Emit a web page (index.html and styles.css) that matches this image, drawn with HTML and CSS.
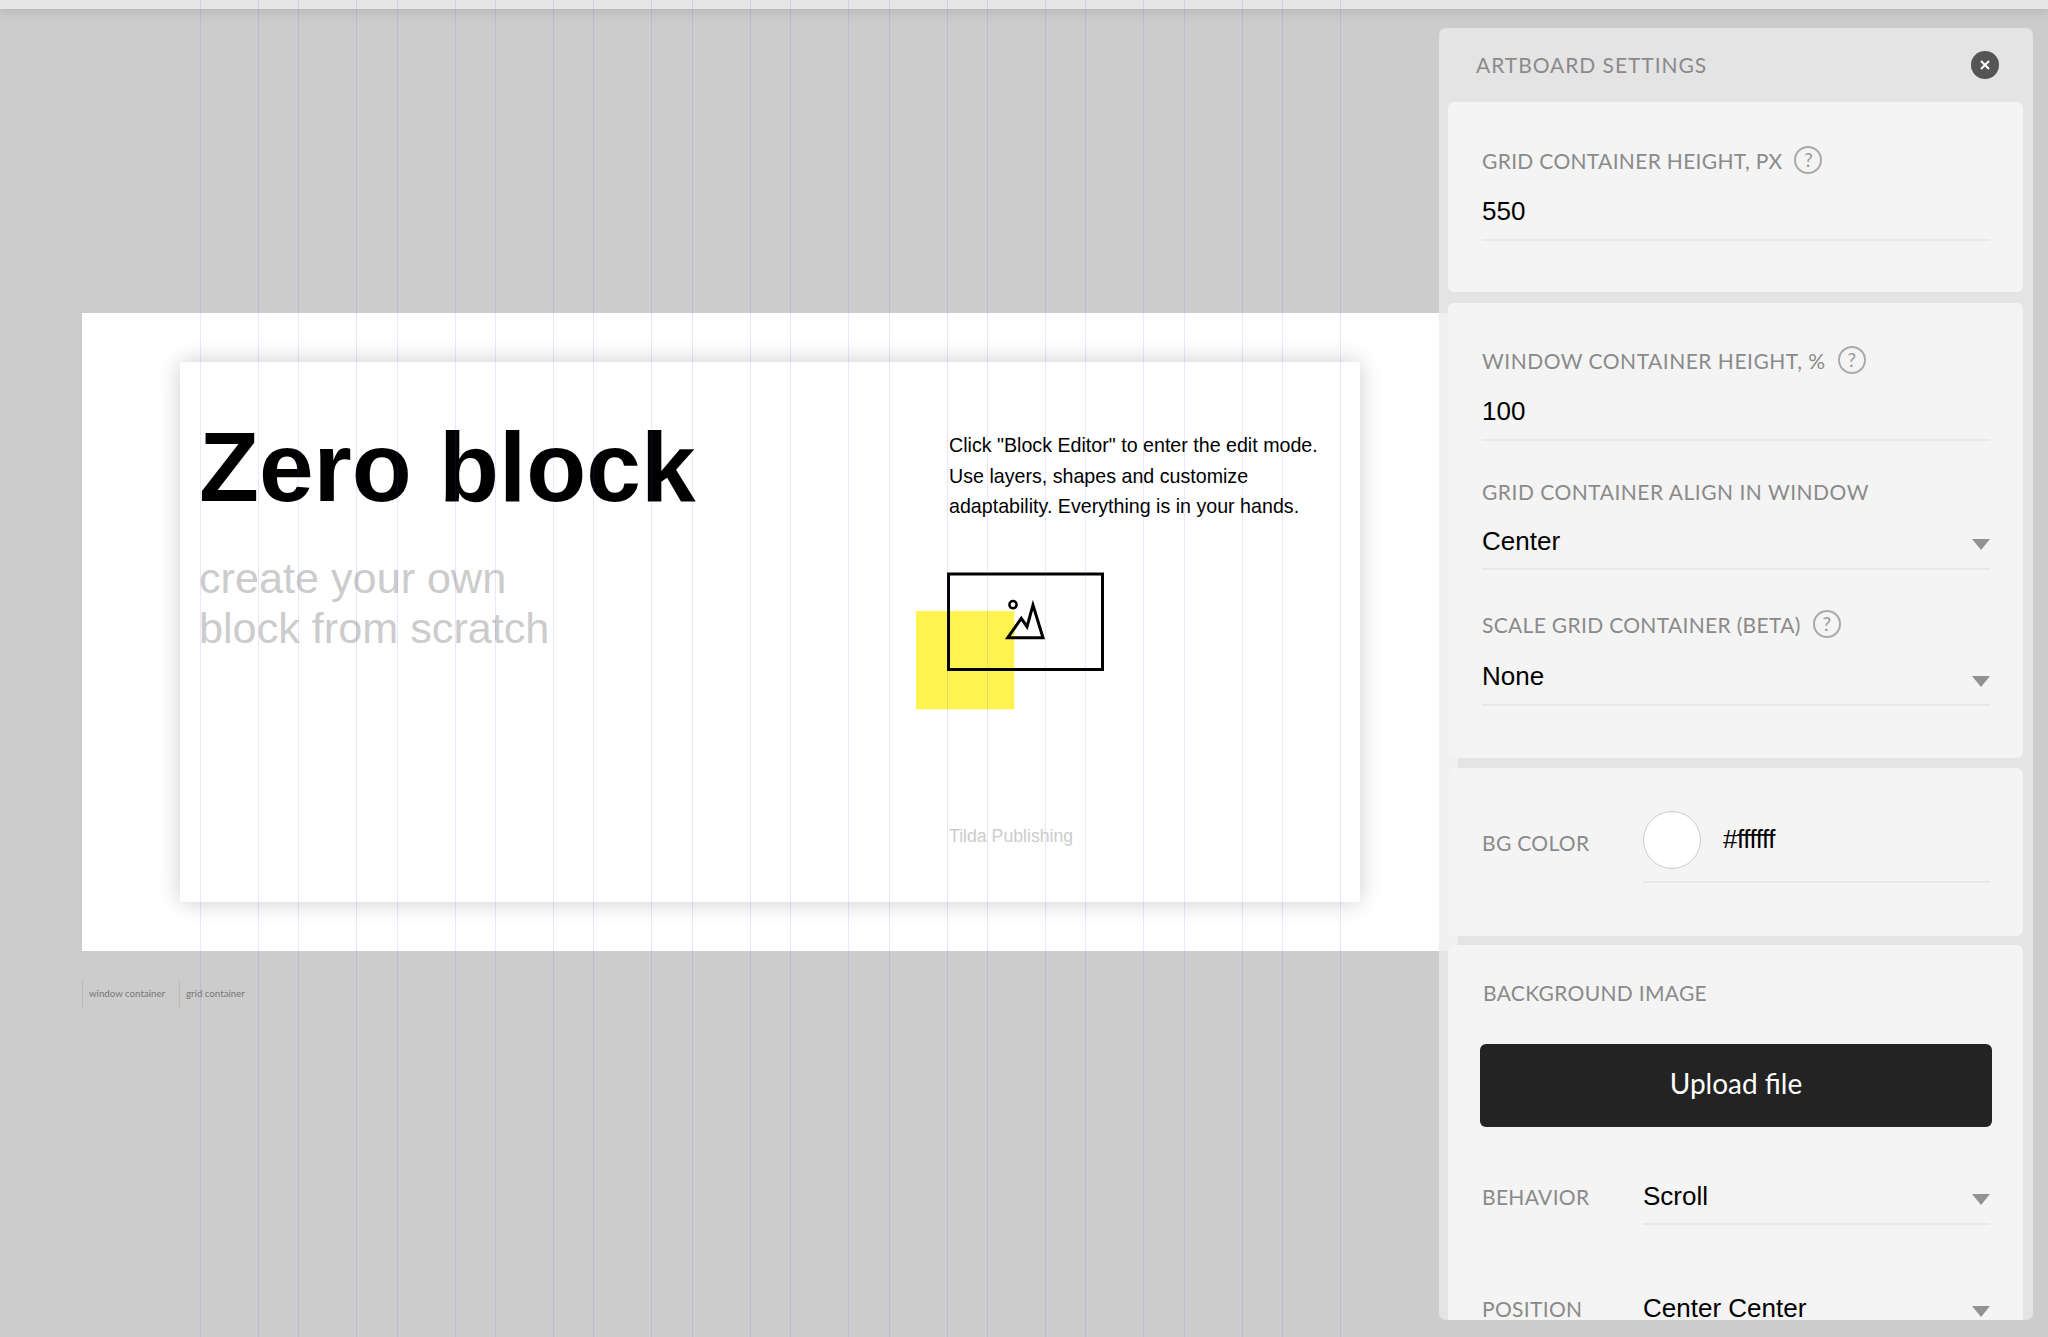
FILE: index.html
```html
<!DOCTYPE html>
<html lang="en">
<head>
<meta charset="utf-8">
<title>Artboard settings</title>
<link rel="stylesheet" href="styles.css">
</head>
<body>
<div class="topbar"></div>
<main class="stage">
  <section class="window">
    <div class="grid-container">
      <div class="col-left">
        <h1 class="title">Zero block</h1>
        <p class="subtitle">create your own<br>block from scratch</p>
      </div>
      <div class="col-right">
        <p class="lead">Click "Block Editor" to enter the edit mode.<br>Use layers, shapes and customize<br>adaptability. Everything is in your hands.</p>
        <svg class="picture" width="190" height="140" viewBox="0 0 190 140" aria-hidden="true">
          <rect class="pic-yellow" x="0" y="40" width="98.3" height="98.3"/>
          <rect class="pic-line" x="32.5" y="3" width="154" height="95.5"/>
          <circle class="pic-thin" cx="97" cy="33.7" r="3.6"/>
          <polygon class="pic-line" points="91.8,66.7 105.3,47.3 111,55.7 117,34 127,66.7"/>
        </svg>
        <p class="credit">Tilda Publishing</p>
      </div>
    </div>
  </section>
  <div class="tags">
    <span class="tag tag-window">window container</span>
    <span class="tag">grid container</span>
  </div>
</main>

<div class="guides" aria-hidden="true">
  <i></i><i></i><i></i><i></i><i></i><i></i><i></i><i></i><i></i><i></i><i></i><i></i>
</div>

<aside class="panel">
  <header class="panel-head">
    <h2 class="panel-title">ARTBOARD SETTINGS</h2>
    <button class="close" type="button" aria-label="Close">
      <svg width="12" height="12" viewBox="0 0 12 12"><path d="M2 2l8 8M10 2l-8 8"/></svg>
    </button>
  </header>

  <section class="card card-a">
    <div class="label">GRID CONTAINER HEIGHT, PX <span class="help">?</span></div>
    <div class="value v-a">550</div>
  </section>

  <section class="card card-b">
    <div class="label label-wide">WINDOW CONTAINER HEIGHT, % <span class="help">?</span></div>
    <div class="value v-a">100</div>
    <div class="label l-b label-wide">GRID CONTAINER ALIGN IN WINDOW</div>
    <div class="value v-b">Center<span class="caret"></span></div>
    <div class="label l-c">SCALE GRID CONTAINER (BETA) <span class="help">?</span></div>
    <div class="value v-c">None<span class="caret caret-low"></span></div>
  </section>

  <section class="card card-c">
    <div class="row">
      <div class="label row-label bg-label">BG COLOR</div>
      <div class="swatch-field">
        <span class="swatch"></span>
        <span class="hex">#ffffff</span>
      </div>
    </div>
  </section>

  <section class="card card-d">
    <div class="label image-label">BACKGROUND IMAGE</div>
    <button class="upload" type="button">Upload file</button>
    <div class="row row-behavior">
      <div class="label row-label">BEHAVIOR</div>
      <div class="value row-value">Scroll<span class="caret"></span></div>
    </div>
    <div class="row row-position">
      <div class="label row-label">POSITION</div>
      <div class="value row-value">Center Center<span class="caret caret-high"></span></div>
    </div>
  </section>
</aside>
</body>
</html>
```
FILE: styles.css
```css
* { box-sizing: border-box; }

html, body {
  margin: 0;
  height: 1337px;
  overflow: hidden;
}

body {
  position: relative;
  background: #ccc;
  font-family: "Liberation Sans", Arial, sans-serif;
  color: #000;
}

p, h1, h2 { margin: 0; font-weight: normal; }

.topbar {
  height: 9px;
  background: #e6e6e6;
  box-shadow: 0 2px 12px rgba(0, 0, 0, .14);
  position: relative;
}

/* artboard */
.stage { padding: 304px 0 0 82px; }

.window {
  width: 1376px;
  height: 638px;
  padding: 49px 0 0 98px;
  background: #fff;
}

.grid-container {
  display: flex;
  width: 1180px;
  height: 540px;
  background: #fff;
  box-shadow: 0 0 22px rgba(0, 0, 0, .2);
}

.col-left { width: 768px; padding: 56px 0 0 19px; }

.title {
  font-size: 98.2px;
  line-height: 98px;
  font-weight: bold;
  white-space: nowrap;
}

.subtitle {
  margin-top: 37px;
  font-size: 43.2px;
  line-height: 50px;
  color: #ccc;
}

.col-right { padding-top: 68px; }

.lead {
  margin-left: 1px;
  font-size: 19.65px;
  line-height: 30.6px;
  white-space: nowrap;
}

.picture { display: block; margin: 49px 0 0 -32px; }
.pic-yellow { fill: #fff350; }
.pic-line { fill: none; stroke: #000; stroke-width: 3; }
.pic-thin { fill: none; stroke: #000; stroke-width: 2.5; }

.credit {
  margin: 113px 0 0 1px;
  font-size: 17.7px;
  line-height: 24px;
  color: #ccc;
}

.tags { display: flex; margin-top: 29px; }

.tag {
  width: 97px;
  height: 29px;
  padding-left: 6px;
  border-left: 1px solid #bbb;
  font-family: Lato, sans-serif;
  font-size: 9.7px;
  line-height: 27px;
  color: #777;
  white-space: nowrap;
}

/* column guides, laid over the artboard */
.guides {
  position: absolute;
  top: 0;
  left: 200px;
  width: 1141px;
  height: 1337px;
  display: flex;
  justify-content: space-between;
  pointer-events: none;
}

.guides i {
  width: 59px;
  border-left: 1px solid rgba(85, 65, 255, .13);
  border-right: 1px solid rgba(85, 65, 255, .13);
}

/* settings panel */
.panel {
  position: absolute;
  top: 28px;
  left: 1439px;
  width: 594px;
  height: 1292px;
  padding: 0 10px 0 9px;
  border-radius: 7px;
  background: rgba(235, 235, 235, .77);
  display: flex;
  flex-direction: column;
  font-family: Lato, sans-serif;
}

.panel-head {
  flex: none;
  height: 73px;
  margin-bottom: 1px;
  padding: 0 4px 0 28px;
  display: flex;
  align-items: center;
  justify-content: space-between;
}

.panel-title {
  font-size: 21px;
  letter-spacing: .95px;
  color: #8a8a8a;
}

.close {
  width: 28px;
  height: 28px;
  margin-right: 20px;
  padding: 0;
  border: 0;
  border-radius: 50%;
  background: #555;
  display: flex;
  align-items: center;
  justify-content: center;
}

.close svg path { fill: none; stroke: #fff; stroke-width: 2; }

.card {
  flex: none;
  padding: 0 33px 0 34px;
  border-radius: 6px;
  background: #f4f4f4;
}

.card-a { height: 190px; padding-top: 46px; }
.card-b { height: 455px; margin-top: 11px; padding-top: 45px; }
.card-c { height: 168px; margin-top: 10px; padding-top: 43px; }
.card-d {
  flex: 1 1 0;
  min-height: 0;
  margin-top: 9px;
  padding-top: 35px;
  border-radius: 6px 6px 0 0;
}

.label {
  display: flex;
  align-items: center;
  height: 24px;
  font-size: 21px;
  letter-spacing: .32px;
  color: #8a8a8a;
  white-space: nowrap;
}

.label-wide { letter-spacing: .5px; }

.help {
  width: 28px;
  height: 28px;
  margin-left: 12px;
  border: 2px solid #aaa;
  border-radius: 50%;
  font-size: 19px;
  line-height: 23px;
  letter-spacing: 0;
  text-align: center;
  color: #999;
}

.value {
  display: flex;
  justify-content: space-between;
  align-items: flex-start;
  font-family: "Liberation Sans", Arial, sans-serif;
  font-size: 26px;
  line-height: 30px;
  color: #000;
  border-bottom: 2px solid #e8e8e8;
}

.v-a { margin-top: 24px; padding-bottom: 13px; }
.v-b { margin-top: 23px; padding-bottom: 12px; }
.v-c { margin-top: 25px; padding-bottom: 13px; }
.l-b { margin-top: 38px; }
.l-c { margin-top: 42px; }

.caret {
  width: 0;
  height: 0;
  margin-top: 13px;
  border-style: solid;
  border-width: 11px 9px 0;
  border-color: #929292 transparent transparent;
}

.caret-low { margin-top: 15px; }
.caret-high { margin-top: 11px; }

.row { display: flex; align-items: flex-start; }

.row-label { flex: none; width: 161px; }
.bg-label { margin-top: 19px; }

.swatch-field {
  flex: 1;
  height: 72px;
  display: flex;
  align-items: flex-start;
  gap: 22px;
  border-bottom: 2px solid #e8e8e8;
}

.swatch {
  width: 58px;
  height: 58px;
  border: 1.5px solid #ccc;
  border-radius: 50%;
  background: #fff;
}

.hex {
  margin-top: 13px;
  font-family: "Liberation Sans", Arial, sans-serif;
  font-size: 26px;
  line-height: 30px;
  letter-spacing: -.5px;
  color: #000;
}

.image-label { margin-left: 1px; }

.upload {
  display: block;
  width: 512px;
  height: 83px;
  margin: 40px 0 0 -2px;
  padding: 0 0 5px;
  border: 0;
  border-radius: 6px;
  background: #232323;
  font-family: Lato, sans-serif;
  font-size: 28px;
  color: #fff;
}

.row-behavior { margin-top: 54px; }
.row-behavior .row-label { margin-top: 3px; }
.row-value { flex: 1; padding-bottom: 12px; }

.row-position { margin-top: 70px; }
.row-position .row-label { height: 20px; margin-top: 3px; }
.row-position .row-value { padding-bottom: 0; border-bottom: 0; line-height: 26px; }
```
